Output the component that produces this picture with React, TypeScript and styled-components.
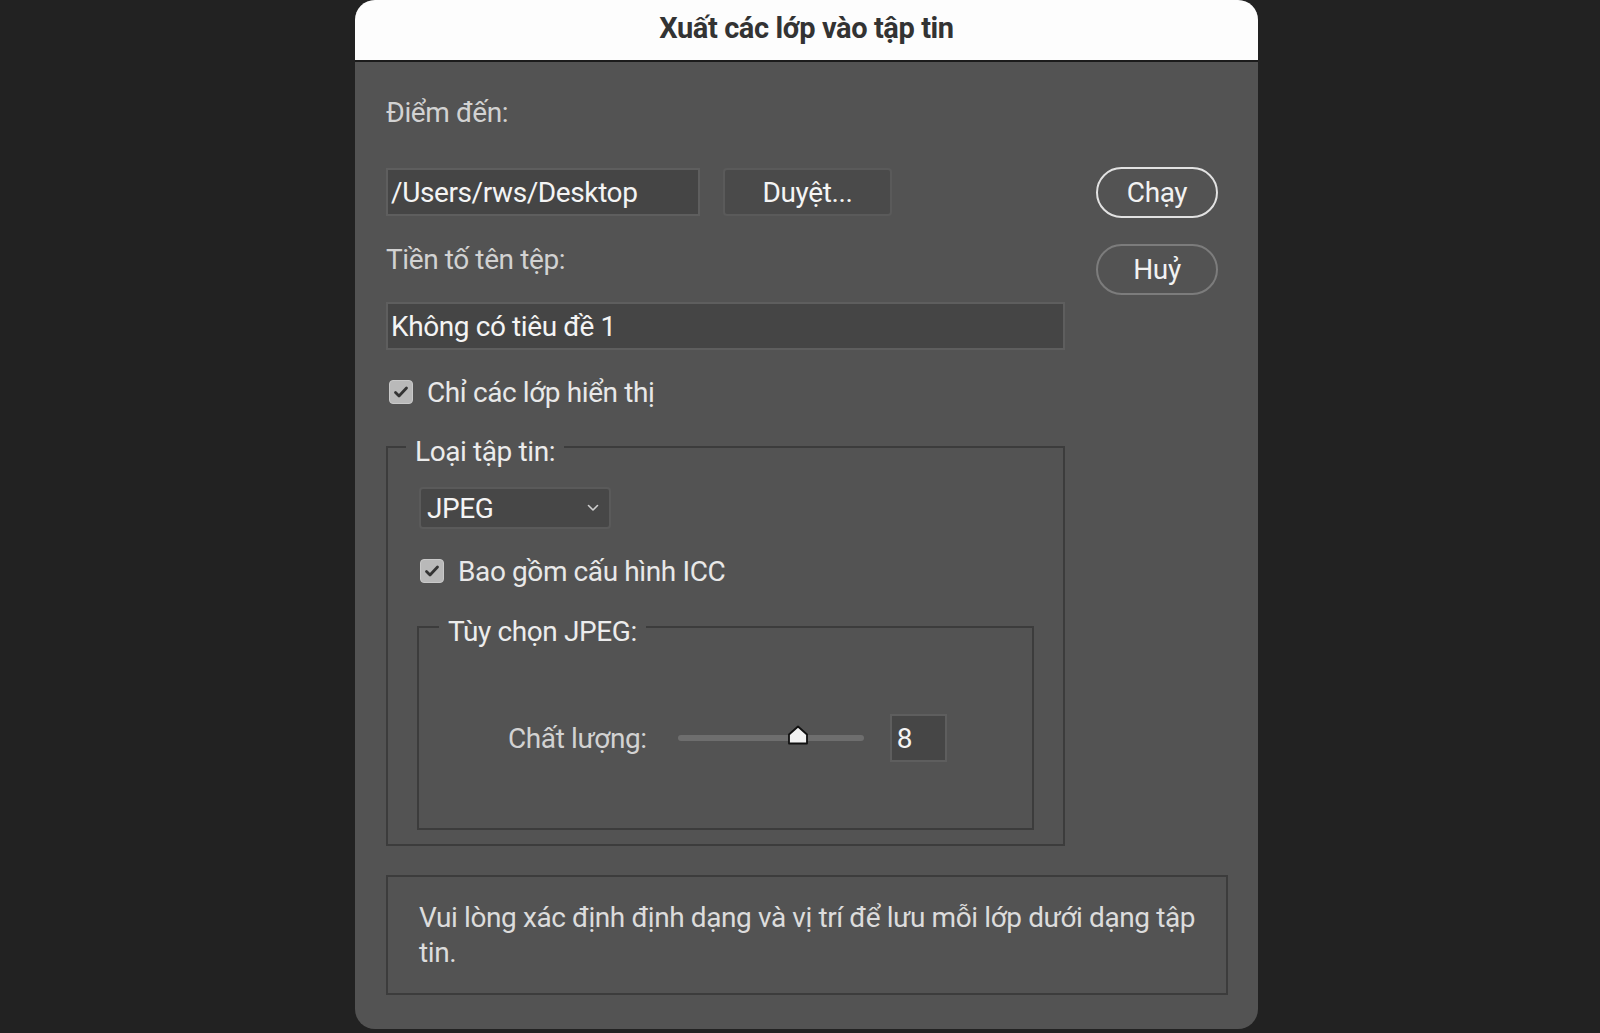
import React from 'react';
import styled, { createGlobalStyle } from 'styled-components';

const FONT = `Roboto, "Liberation Sans", Arial, sans-serif`;

const GlobalStyle = createGlobalStyle`
  html, body {
    margin: 0;
    padding: 0;
    background: #222222;
  }
  body {
    font-family: ${FONT};
    letter-spacing: -0.4px;
  }
`;

const Page = styled.div`
  width: 1600px;
  height: 1033px;
  overflow: hidden;
  background: #222222;
  padding-left: 355px;
  box-sizing: border-box;
`;

const Dialog = styled.div`
  width: 903px;
  height: 1029px;
  background: #535353;
  border-radius: 20px;
  overflow: hidden;
  display: flex;
  flex-direction: column;
`;

const TitleBar = styled.div`
  flex-shrink: 0;
  height: 62px;
  padding-bottom: 4px;
  box-sizing: border-box;
  background: #fdfdfd;
  border-bottom: 2px solid #1c1c1c;
  display: flex;
  align-items: center;
  justify-content: center;
  font-weight: bold;
  font-size: 29px;
  color: #333333;
`;

const Body = styled.div`
  padding: 35px 30px 35px 31px;
  display: flex;
  flex-direction: column;
`;

const Top = styled.div`
  display: flex;
`;

const LeftCol = styled.div`
  width: 679px;
  display: flex;
  flex-direction: column;
`;

const RightCol = styled.div`
  margin-left: 31px;
  padding-top: 70px;
  display: flex;
  flex-direction: column;
  gap: 26px;
`;

const Label = styled.div<{ $mt?: number }>`
  margin-top: ${(p) => p.$mt ?? 0}px;
  font-size: 28px;
  line-height: 32px;
  color: #d2d2d2;
`;

const Row = styled.div<{ $mt?: number }>`
  margin-top: ${(p) => p.$mt ?? 0}px;
  display: flex;
  align-items: center;
  gap: 23px;
`;

const TextField = styled.input<{ $w?: number; $mt?: number }>`
  width: ${(p) => (p.$w ? `${p.$w}px` : '100%')};
  margin-top: ${(p) => p.$mt ?? 0}px;
  height: 48px;
  box-sizing: border-box;
  padding: 0 3px;
  background: #454545;
  border: 2px solid #5e5e5e;
  border-radius: 0;
  outline: none;
  font-family: ${FONT};
  font-size: 28px;
  letter-spacing: -0.4px;
  color: #f4f4f4;
`;

const SquareButton = styled.button`
  width: 169px;
  height: 48px;
  background: #4a4a4a;
  border: 2px solid #5a5a5a;
  border-radius: 4px;
  font-family: ${FONT};
  font-size: 28px;
  letter-spacing: -0.4px;
  color: #f4f4f4;
  padding: 0;
`;

const PillButton = styled.button<{ $primary?: boolean }>`
  width: 122px;
  height: 51px;
  border-radius: 26px;
  background: transparent;
  border: 2px solid ${(p) => (p.$primary ? '#e2e2e2' : '#7c7c7c')};
  font-family: ${FONT};
  font-size: 28px;
  letter-spacing: -0.4px;
  color: #f2f2f2;
  padding: 0;
`;

const CheckRow = styled.label<{ $mt?: number; $ml?: number }>`
  margin-top: ${(p) => p.$mt ?? 0}px;
  margin-left: ${(p) => p.$ml ?? 3}px;
  height: 32px;
  display: flex;
  align-items: center;
  gap: 14px;
  font-size: 28px;
  color: #e8e8e8;
  white-space: nowrap;
`;

const Box = styled.span`
  width: 24px;
  height: 24px;
  box-sizing: border-box;
  border-radius: 4px;
  border: 1px solid #c9c9c9;
  background: #b9b9b9;
  display: flex;
  align-items: center;
  justify-content: center;
`;

const Group = styled.fieldset<{ $mt?: number; $inner?: boolean }>`
  margin: ${(p) => p.$mt ?? 0}px 0 0 0;
  padding: 0 29px ${(p) => (p.$inner ? 0 : 14)}px 29px;
  border: 2px solid #3c3c3c;
  min-width: 0;
  display: flex;
  flex-direction: column;
  align-items: flex-start;
`;

const Legend = styled.legend<{ $ml: number }>`
  margin-left: ${(p) => p.$ml}px;
  padding: 10px 9px 0 9px;
  font-size: 28px;
  line-height: 32px;
  color: #ececec;
`;

const Select = styled.div`
  margin: 19px 0 0 2px;
  width: 192px;
  height: 42px;
  box-sizing: border-box;
  padding: 0 10px 0 6px;
  background: #474747;
  border: 2px solid #5a5a5a;
  border-radius: 4px;
  display: flex;
  align-items: center;
  justify-content: space-between;
  font-size: 28px;
  color: #f4f4f4;
`;

const QualityRow = styled.div`
  margin: 66px 0 66px 60px;
  display: flex;
  align-items: center;
`;

const QualityLabel = styled.span`
  font-size: 28px;
  color: #d2d2d2;
  white-space: nowrap;
`;

const Track = styled.div`
  flex-shrink: 0;
  position: relative;
  margin-left: 31px;
  width: 186px;
  height: 6px;
  border-radius: 3px;
  background: #6e6e6e;
`;

const Thumb = styled.svg`
  position: absolute;
  top: -10px;
  margin-left: -11px;
`;

const NumberBox = styled.div`
  flex-shrink: 0;
  margin-left: 26px;
  width: 57px;
  height: 48px;
  box-sizing: border-box;
  padding-left: 5px;
  background: #464646;
  border: 2px solid #5e5e5e;
  display: flex;
  align-items: center;
  font-size: 28px;
  color: #f4f4f4;
`;

const Note = styled.div`
  margin-top: 29px;
  border: 2px solid #3c3c3c;
  padding: 23px 10px 23px 31px;
  font-size: 28px;
  line-height: 35px;
  color: #dcdcdc;
`;

const Check = () => (
  <Box>
    <svg width="16" height="14" viewBox="0 0 16 14">
      <path d="M2.5 7.5 L6 11 L13.5 3" fill="none" stroke="#343434" strokeWidth="2.8" strokeLinecap="round" strokeLinejoin="round" />
    </svg>
  </Box>
);

const Chevron = () => (
  <svg width="12" height="8" viewBox="0 0 12 8">
    <path d="M1.5 1.5 L6 6 L10.5 1.5" fill="none" stroke="#cfcfcf" strokeWidth="1.6" strokeLinecap="round" strokeLinejoin="round" />
  </svg>
);

const quality = 8;
const maxQuality = 12.4;

const App = () => {
  return (
    <Page>
      <GlobalStyle />
      <Dialog>
        <TitleBar>Xuất các lớp vào tập tin</TitleBar>
        <Body>
          <Top>
            <LeftCol>
              <Label>Điểm đến:</Label>
              <Row $mt={39}>
                <TextField $w={314} readOnly value="/Users/rws/Desktop" />
                <SquareButton>Duyệt...</SquareButton>
              </Row>
              <Label $mt={28}>Tiền tố tên tệp:</Label>
              <TextField $mt={26} readOnly value="Không có tiêu đề 1" />
              <CheckRow $mt={26}>
                <Check />
                Chỉ các lớp hiển thị
              </CheckRow>
              <Group $mt={18}>
                <Legend $ml={-11}>Loại tập tin:</Legend>
                <Select>
                  JPEG
                  <Chevron />
                </Select>
                <CheckRow $mt={26}>
                  <Check />
                  Bao gồm cấu hình ICC
                </CheckRow>
                <Group $mt={19} $inner style={{ alignSelf: 'stretch' }}>
                  <Legend $ml={-9}>Tùy chọn JPEG:</Legend>
                  <QualityRow>
                    <QualityLabel>Chất lượng:</QualityLabel>
                    <Track>
                      <Thumb
                        width="22"
                        height="20"
                        viewBox="0 0 22 20"
                        style={{ left: `${(quality / maxQuality) * 100}%` }}
                      >
                        <path
                          d="M2 18.5 L2 9.5 L11 1.5 L20 9.5 L20 18.5 Z"
                          fill="#f2f2f2"
                          stroke="#111"
                          strokeWidth="1.8"
                          strokeLinejoin="round"
                        />
                      </Thumb>
                    </Track>
                    <NumberBox>{quality}</NumberBox>
                  </QualityRow>
                </Group>
              </Group>
            </LeftCol>
            <RightCol>
              <PillButton $primary>Chạy</PillButton>
              <PillButton>Huỷ</PillButton>
            </RightCol>
          </Top>
          <Note>Vui lòng xác định định dạng và vị trí để lưu mỗi lớp dưới dạng tập tin.</Note>
        </Body>
      </Dialog>
    </Page>
  );
};

export default App;
